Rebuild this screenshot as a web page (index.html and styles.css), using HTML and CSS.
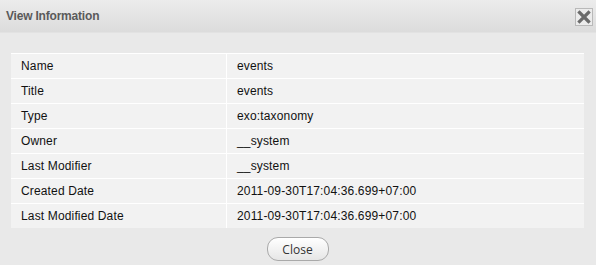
FILE: index.html
```html
<!DOCTYPE html>
<html lang="en">
<head>
  <meta charset="UTF-8">
  <title>View Information</title>
  <link rel="stylesheet" href="styles.css">
</head>
<body>
  <div class="popup">
    <div class="popup-header">
      <span class="popup-title">View Information</span>
      <a class="close-icon" title="Close">
        <svg width="14" height="14" viewBox="0 0 14 14">
          <path d="M2.5 2.5 L11.5 11.5 M11.5 2.5 L2.5 11.5" stroke="#6b6b6b" stroke-width="3.2" stroke-linecap="square"/>
        </svg>
      </a>
    </div>
    <div class="popup-body">
      <table class="info-table">
        <tr><td class="label">Name</td><td>events</td></tr>
        <tr><td class="label">Title</td><td>events</td></tr>
        <tr><td class="label">Type</td><td>exo:taxonomy</td></tr>
        <tr><td class="label">Owner</td><td>__system</td></tr>
        <tr><td class="label">Last Modifier</td><td>__system</td></tr>
        <tr><td class="label">Created Date</td><td>2011-09-30T17:04:36.699+07:00</td></tr>
        <tr><td class="label">Last Modified Date</td><td>2011-09-30T17:04:36.699+07:00</td></tr>
      </table>
      <div class="actions">
        <button class="button">Close</button>
      </div>
    </div>
  </div>
</body>
</html>
```

FILE: styles.css
```css
body { margin: 0; background: #e9e9e9; font-family: "Liberation Sans", Arial, sans-serif; }
.popup { width: 596px; height: 265px; background: #e9e9e9; }
.popup-header { height: 33px; display: flex; align-items: center; justify-content: space-between; padding: 0 3px 0 6px; box-sizing: border-box; background: linear-gradient(#ececec, #dcdcdc); border-bottom: 1px solid #e2e2e2; }
.popup-title { font-size: 12px; font-weight: bold; color: #5a5a5a; letter-spacing: -0.2px; }
.close-icon { width: 18px; height: 18px; display: flex; align-items: center; justify-content: center; background: #ececec; border: 1px solid #b9b9b9; box-sizing: border-box; margin-top: 2px; }
.popup-body { padding: 20px 12px 0 11px; }
.info-table { width: 573px; border-collapse: collapse; background: #f2f2f2; border-top: 1px solid #fff; }
.info-table td { height: 24px; padding: 0 0 0 10px; border: 1px solid #fff; font-size: 12px; letter-spacing: 0.15px; color: #111; }
.info-table td:first-child { border-left: none; }
.info-table td:last-child { border-right: none; }
.info-table tr:last-child td { border-bottom: none; }
.info-table .label { width: 205px; }
.actions { display: flex; justify-content: center; padding-top: 9px; }
.button { width: 62px; height: 24px; border: 1px solid #a9a9a9; border-radius: 11px; background: linear-gradient(#ffffff, #e6e6e6); font-family: "Open Sans", sans-serif; font-size: 12px; color: #333; cursor: pointer; padding: 0; }
```
